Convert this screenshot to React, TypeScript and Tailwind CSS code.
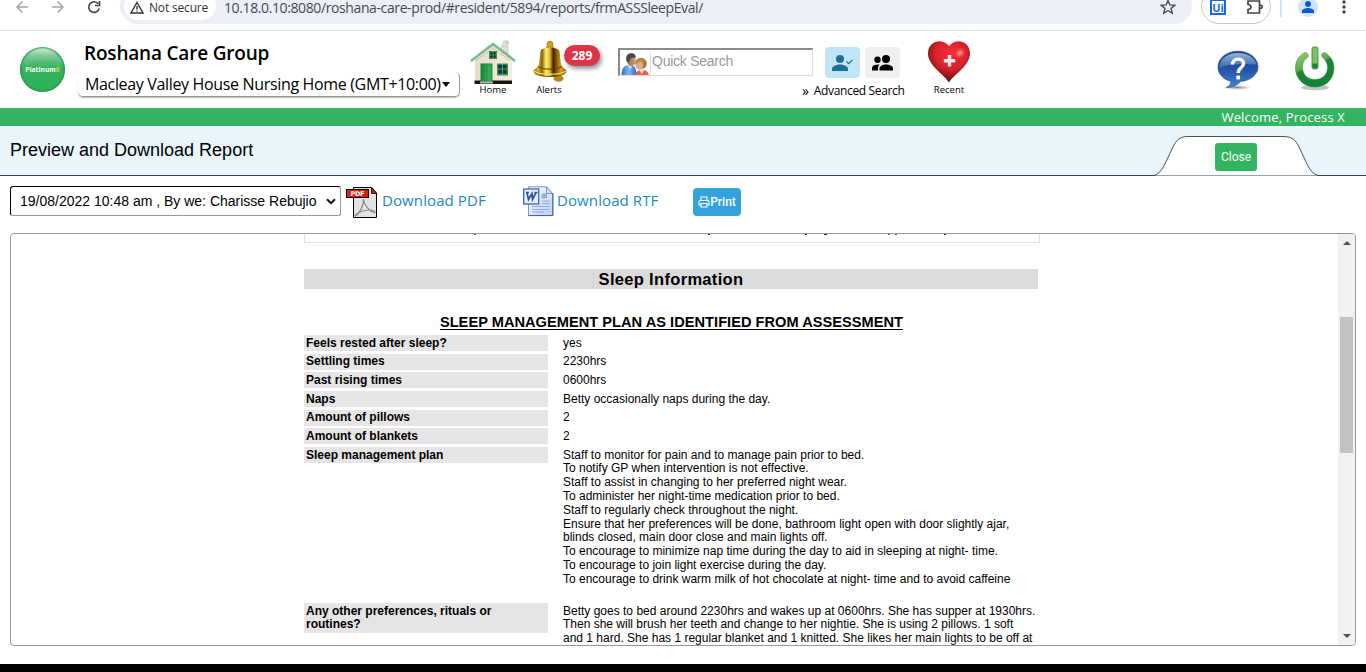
import React from "react";

const UI = "font-['Open_Sans','Noto_Sans',sans-serif]";
const ARIAL = "font-['Liberation_Sans',Arial,sans-serif]";

function HouseIcon() {
  return (
    <svg width="46" height="45" viewBox="0 0 46 45">
      <defs>
        <linearGradient id="door" x1="0" x2="1">
          <stop offset="0" stopColor="#1c8a38" />
          <stop offset="1" stopColor="#46b565" />
        </linearGradient>
        <linearGradient id="wall" x1="0" x2="1">
          <stop offset="0" stopColor="#e6dccb" />
          <stop offset="1" stopColor="#f4ecdf" />
        </linearGradient>
      </defs>
      <circle cx="35" cy="3.500" r="3.400" fill="#dfe1e4" />
      <circle cx="37" cy="2.500" r="2" fill="#c6c9cd" />
      <rect x="31" y="6" width="7" height="11" fill="#e3ddd1" stroke="#c4bdb0" strokeWidth=".6" />
      <path d="M5 20 L23 5 L42 20 V43 H5Z" fill="url(#wall)" />
      <rect x="4.500" y="40.500" width="37.500" height="3.500" fill="#1d1614" />
      <path d="M1 21 L23 4 L45 21" fill="none" stroke="#8aa792" strokeWidth="2.400" />
      <path d="M1 21 L23 4 L45 21" fill="none" stroke="#62cc82" strokeWidth="1.200" />
      <path d="M6 20.500 L23 8 L40 20.500" fill="none" stroke="#cdbfa9" strokeWidth="1" />
      <rect x="19" y="11" width="8" height="8" fill="#2e9a4a" />
      <rect x="20.300" y="12.300" width="5.400" height="5.400" fill="#1c2d3f" />
      <path d="M23 12v6M20 15h6" stroke="#49a45f" strokeWidth=".7" />
      <rect x="10.500" y="23.500" width="12" height="18" fill="#188036" />
      <rect x="11.500" y="24.500" width="10" height="17" fill="url(#door)" />
      <path d="M13 26.500h3v5.500h-3zM17.500 26.500h3v5.500h-3zM13 34h3v6h-3zM17.500 34h3v6h-3z" fill="none" stroke="#1f903f" strokeWidth=".5" />
      <rect x="27" y="23.500" width="11" height="12" fill="#2e9a4a" />
      <rect x="28.300" y="24.800" width="8.400" height="9" fill="#1b3346" />
      <path d="M32.500 24v10M28 29h9" stroke="#4fb069" strokeWidth=".9" />
      <rect x="10" y="41.500" width="13" height="2" fill="#bdb6ae" />
    </svg>
  );
}

function BellIcon() {
  return (
    <svg className="relative left-px" width="38" height="44" viewBox="0 0 38 44">
      <defs>
        <linearGradient id="bell" x1="0" x2="1">
          <stop offset="0" stopColor="#8a6206" />
          <stop offset=".14" stopColor="#d9b02c" />
          <stop offset=".26" stopColor="#8c6206" />
          <stop offset=".38" stopColor="#fff07a" />
          <stop offset=".5" stopColor="#e3b62a" />
          <stop offset=".6" stopColor="#3d2102" />
          <stop offset=".7" stopColor="#8a5c08" />
          <stop offset=".84" stopColor="#d5a524" />
          <stop offset="1" stopColor="#6b4504" />
        </linearGradient>
      </defs>
      <ellipse cx="27.500" cy="38.500" rx="5" ry="3.300" fill="#b38a16" />
      <circle cx="19" cy="4.200" r="3" fill="#d3a21b" stroke="#8c6507" strokeWidth=".7" />
      <rect x="15" y="6" width="8" height="2.500" rx="1.200" fill="#c59416" />
      <path d="M9.500 11C10.500 6.800 27.500 6.800 28.500 11C29.500 17 29 22.500 31 26.500L35.500 30.500C37 38.500 1 38.500 2.500 30.500L7 26.500C9 22.500 8.500 17 9.500 11Z" fill="url(#bell)" />
      <path d="M7 26.500C13 30 25 30 31 26.500" fill="none" stroke="#6b4504" strokeWidth="1.100" />
      <path d="M3 31C9 35.500 29 35.500 35 31" fill="none" stroke="#f7dc55" strokeWidth="1.200" />
      <path d="M4 33.500C10 37.500 28 37.500 34 33.500" fill="none" stroke="#7b5405" strokeWidth="1" />
    </svg>
  );
}

function PeopleIcon() {
  return (
    <svg width="29" height="24" viewBox="0 0 29 24">
      <defs>
        <linearGradient id="blue" x1="0" x2="1">
          <stop offset="0" stopColor="#2f6fca" />
          <stop offset=".5" stopColor="#82b6f5" />
          <stop offset="1" stopColor="#2c6ac4" />
        </linearGradient>
        <linearGradient id="face" x1="0" x2="1">
          <stop offset="0" stopColor="#8d6647" />
          <stop offset="1" stopColor="#d6a680" />
        </linearGradient>
      </defs>
      <path d="M.5 24C.5 16 3 13 8.500 13S15.500 16 15.500 24Z" fill="url(#blue)" />
      <path d="M6.500 12.500h5l-2 5z" fill="#e9dfe0" />
      <ellipse cx="10.500" cy="8.500" rx="4.300" ry="5.500" fill="url(#face)" />
      <path d="M5.500 9.500C4.300 3 7 1.200 10.200 1.200S15.200 3 14.500 6C11 4.500 8.500 6 8 10.500Z" fill="#43474b" />
      <path d="M14 24C14.500 20 16.500 18 21 18S27.500 20 28 24Z" fill="#ea5d53" />
      <path d="M18 18h5l-2 4z" fill="#f2d6c4" />
      <circle cx="20" cy="11.500" r="5.800" fill="#a77b3d" />
      <ellipse cx="18.500" cy="13" rx="3.500" ry="4.500" fill="#d9ae88" />
      <path d="M14.500 12.500C14 6.500 21.500 5 25 9.500C20.500 8.500 17.500 9.500 14.500 12.500Z" fill="#b98e45" />
    </svg>
  );
}

function HeartIcon() {
  return (
    <svg width="44" height="43" viewBox="0 0 44 43">
      <defs>
        <radialGradient id="heart" cx=".55" cy=".3" r=".68">
          <stop offset="0" stopColor="#f5323b" />
          <stop offset=".55" stopColor="#d8202b" />
          <stop offset="1" stopColor="#5c1216" />
        </radialGradient>
        <radialGradient id="glow">
          <stop offset="0" stopColor="#ffb4b4" />
          <stop offset="1" stopColor="#ff5a5e" stopOpacity="0" />
        </radialGradient>
      </defs>
      <path d="M22 42.500C17 34 1 26 1 13.500C1 5 7 1.200 12.500 1.200C17 1.200 20 3.500 22 6C24 3.500 27 1.200 31.500 1.200C37 1.200 43 5 43 13.500C43 26 27 34 22 42.500Z" fill="url(#heart)" />
      <ellipse cx="33" cy="13" rx="6" ry="5" fill="url(#glow)" transform="rotate(-35 33 13)" />
      <path d="M20.800 15h3.400v4h4v3.400h-4v4h-3.400v-4h-4V19h4z" fill="#e9e9ea" />
    </svg>
  );
}

function HelpIcon() {
  return (
    <svg width="42" height="41" viewBox="0 0 42 41">
      <defs>
        <linearGradient id="help" x1="0" x2="0" y1="0" y2="1">
          <stop offset="0" stopColor="#1d4686" />
          <stop offset=".5" stopColor="#2452a6" />
          <stop offset="1" stopColor="#3c86d2" />
        </linearGradient>
        <linearGradient id="shine" x1="0" x2="0" y1="0" y2="1">
          <stop offset="0" stopColor="#b6cfee" stopOpacity=".8" />
          <stop offset="1" stopColor="#6b96d3" stopOpacity=".45" />
        </linearGradient>
        <radialGradient id="shade">
          <stop offset="0" stopColor="#555" stopOpacity=".75" />
          <stop offset="1" stopColor="#999" stopOpacity="0" />
        </radialGradient>
      </defs>
      <ellipse cx="20" cy="37.500" rx="15" ry="2.600" fill="url(#shade)" />
      <path d="M21 1.200C32 1.200 41 8 41 17C41 24.500 33.500 30.500 23.500 31.500C20 35.500 15 37.800 9.500 37.500C12.500 36 14 34 14 31.200C6 29.500 1 24 1 17C1 8 10 1.200 21 1.200Z" fill="url(#help)" stroke="#214c90" strokeWidth=".7" />
      <path d="M21 3C31 3 38.500 8.500 39.500 14.500C28 13.500 12 13.500 2.500 17.500C2.500 8.500 11 3 21 3Z" fill="url(#shine)" />
      <path d="M15.500 14.500C15.500 7.500 26.500 7.500 26.500 13.500C26.500 18 21.200 17.500 21.200 23" fill="none" stroke="#fff" strokeWidth="3.400" />
      <rect x="19.300" y="25.500" width="3.800" height="4" rx="1" fill="#fff" />
    </svg>
  );
}

function PowerIcon() {
  return (
    <svg width="40" height="45" viewBox="0 0 40 45">
      <defs>
        <linearGradient id="power" x1="0" x2=".5" y1="0" y2="1">
          <stop offset="0" stopColor="#97cf73" />
          <stop offset=".45" stopColor="#5cac48" />
          <stop offset=".5" stopColor="#1d8238" />
          <stop offset="1" stopColor="#138338" />
        </linearGradient>
      </defs>
      <ellipse cx="20" cy="41.500" rx="14" ry="2.800" fill="#aaa" opacity=".7" />
      <path d="M9 7C3 10.500 .5 16 .5 22C.5 33 9 41 20 41S39 33 39 22C39 16 36 10.500 30.500 7C27.500 5.500 25.500 9 27.500 11.500C31 14 32.500 17.500 32.500 21.500C32.500 28.500 27.500 33.500 20 33.500S7.500 28.500 7.500 21.500C7.500 17.500 8.500 14 12.500 11.500C14.500 9 12 5.500 9 7Z" fill="url(#power)" stroke="#438d45" strokeWidth=".6" />
      <rect x="17" y="1" width="6" height="22" rx="2" fill="#80c064" stroke="#2e873a" strokeWidth=".8" />
      <path d="M17.400 17.500h5.200v3.500q-2.600 3-5.200 0z" fill="#238238" />
    </svg>
  );
}

function PdfIcon() {
  return (
    <svg className="mt-px shrink-0" width="32" height="32" viewBox="0 0 32 32">
      <path d="M7.500 .5H26L30.500 6.500V30.500H7.500Z" fill="#e2e2e2" stroke="#000" />
      <path d="M25.500 1L31 6.500H25.500Z" fill="#d8210d" stroke="#000" strokeWidth=".8" />
      <path d="M17.500 12C18 18 14 26 9.500 29C8 28 14 24 22 23C26 22.500 29 24 29 25.500C26 26 18.500 20 17.500 12Z" fill="none" stroke="#8b8b8b" strokeWidth="1.200" />
      <rect x=".5" y="2.500" width="22" height="8" fill="#d8210d" stroke="#000" />
      <text x="4.500" y="9" fontFamily="DejaVu Sans" fontSize="6.500" fontWeight="bold" fill="#fff" textLength="14">PDF</text>
    </svg>
  );
}

function WordIcon() {
  return (
    <svg className="shrink-0" width="31" height="31" viewBox="0 0 31 31">
      <defs>
        <linearGradient id="page" x1="0" x2="1" y1="0" y2="1">
          <stop offset="0" stopColor="#fff" />
          <stop offset="1" stopColor="#b9cff3" />
        </linearGradient>
      </defs>
      <path d="M5.500 .8H23.500L29.500 7.500V29.500H5.500Z" fill="url(#page)" stroke="#7d94bf" />
      <path d="M23.500 1V7.500H29.500Z" fill="#d5e2f7" stroke="#6580b2" strokeWidth=".8" />
      <path d="M5.500 29.600H30V7" fill="none" stroke="#41619e" />
      <path d="M19 8h4.500v4h-4.500zM18.500 15h8M18.500 17.500h8M9 20.500h17M9 23.500h17M9 26h12" stroke="#8ba6d5" strokeWidth=".9" fill="#9ab2de" />
      <rect x=".7" y="3" width="15" height="15" fill="#e7effc" stroke="#3c65b4" strokeWidth="1.300" />
      <path d="M3 6.500H6M4 6.500L5.500 13.500L9 7.500L9.500 13.500L13 6.500M11.500 6.500H14.500" stroke="#2a53a4" strokeWidth="1.700" fill="none" />
    </svg>
  );
}

function BrowserBar() {
  return (
    <div className="h-[31px] shrink-0 overflow-hidden border-b border-[#dfdfdf] bg-white">
      <div className={`-mt-3 flex h-9 items-center ${UI}`}>
        <svg className="mt-[2px] ml-4 shrink-0" width="86" height="14" viewBox="0 0 86 14" fill="none" strokeWidth="1.500">
          <path d="M12 7H1.500M6.500 1.500L1 7L6.500 12.500" stroke="#a5a5a5" />
          <path d="M36 7H46.500M41.500 1.500L47 7L41.500 12.500" stroke="#a5a5a5" />
          <path d="M82.300 3.800A5.300 5.300 0 1 0 83.200 8.500" stroke="#474747" strokeWidth="1.700" />
          <path d="M83.500 1V5.500H79" stroke="#474747" strokeWidth="1.700" />
        </svg>
        <div className="ml-[18px] flex h-9 w-[1072px] shrink-0 items-center rounded-full bg-[#eceef8] pl-1">
          <div className="flex h-7 w-[92px] items-center rounded-full bg-white pt-[2px] pl-[6px]">
            <svg width="14" height="13" viewBox="0 0 14 13" fill="none" stroke="#333" strokeWidth="1.400">
              <path d="M7 1.500L13 12H1Z" />
              <path d="M7 5v3.500M7 9.400v1.200" />
            </svg>
            <span className="mt-px ml-[5px] text-xs leading-[12px] font-medium tracking-[-0.17px] whitespace-nowrap text-[#303030]">Not secure</span>
          </div>
          <span className="mt-[4px] ml-2 text-sm leading-[14px] tracking-[-0.39px] whitespace-nowrap text-[#484a50]">
            10.18.0.10:8080/roshana-care-prod/#resident/5894/reports/frmASSSleepEval/
          </span>
          <svg className="mt-[2px] mr-4 ml-auto" width="16" height="16" viewBox="0 0 16 16" fill="none" stroke="#444" strokeWidth="1.300">
            <path d="M8 1.500L9.900 6L14.800 6.300L11 9.400L12.300 14.200L8 11.500L3.700 14.200L5 9.400L1.200 6.300L6.100 6Z" />
          </svg>
        </div>
        <div className="ml-[9px] flex h-9 w-[70px] shrink-0 items-center justify-between rounded-full border border-[#c6c6c6] pt-[2px] pr-[7px] pl-2">
          <span className="flex size-4 items-center justify-center border-2 border-[#1668dc] text-[11px] leading-none font-bold text-[#1668dc]">Ui</span>
          <svg width="17" height="16" viewBox="0 0 17 16" fill="none" stroke="#444" strokeWidth="1.700">
            <path d="M2 2H13.500V14H2V10.500C6 10.500 6 5.500 2 5.500ZM14 6C17 6 17 9.500 14 9.500" />
          </svg>
        </div>
        <span className="mt-1 ml-[9px] h-[18px] w-[2px] bg-[#d3e3fd]" />
        <span className="mt-[2px] ml-4 flex size-5 items-center justify-center overflow-hidden rounded-full bg-[#d3e3fd]">
          <svg width="12" height="12" viewBox="0 0 12 12" fill="#0b57d0">
            <circle cx="6" cy="3" r="2.900" />
            <path d="M0 12V10C0 8 4 7 6 7S12 8 12 10V12Z" />
          </svg>
        </span>
        <svg className="mt-[2px] ml-6" width="4" height="16" viewBox="0 0 4 16" fill="#444">
          <circle cx="2" cy="3" r="1.700" />
          <circle cx="2" cy="8" r="1.700" />
          <circle cx="2" cy="13" r="1.700" />
        </svg>
      </div>
    </div>
  );
}

function Header() {
  return (
    <header className={`flex h-[77px] shrink-0 items-start bg-white text-black ${UI}`}>
      <div className="mt-4 ml-5 flex size-[45px] shrink-0 items-center justify-center rounded-full bg-[linear-gradient(#e4f4e8_0%,#86cb9b_18%,#35b45f_45%,#2cb15a_100%)] shadow-[inset_0_0_2px_1px_#269348]">
        <span className="text-[6.500px] font-bold tracking-[0.1px] text-white">
          Platinum<span className="text-[#d5d32c]">6</span>
        </span>
      </div>
      <div className="mt-2 ml-[13px] w-[382px] shrink-0">
        <h1 className="pl-[6px] text-[19px] leading-[29px] font-semibold tracking-[-0.2px] whitespace-nowrap">Roshana Care Group</h1>
        <div className="mt-[4px] flex h-[25px] items-center rounded-[5px] border-r border-b border-[#999] pl-[7px] text-base whitespace-nowrap shadow-[0_1px_1px_#bbb]">
          <span className="tracking-[-0.34px]">Macleay Valley House Nursing Home (GMT+10:00)</span>
          <span className="ml-px border-x-4 border-t-[5px] border-x-transparent border-t-black" />
        </div>
      </div>
      <div className="mt-[9px] ml-[10px] flex w-[46px] shrink-0 flex-col items-center">
        <HouseIcon />
        <span className="-mt-px text-[9.500px] leading-[12px]">Home</span>
      </div>
      <div className="relative mt-[9px] ml-4 flex w-[34px] shrink-0 flex-col items-center">
        <BellIcon />
        <span className="text-[9.500px] leading-[12px]">Alerts</span>
        <span className="absolute top-[5px] left-[32px] flex h-[21px] w-9 items-center justify-center rounded-full bg-[#dc3545] text-xs font-bold text-white shadow-[2px_3px_4px_#999]">289</span>
      </div>
      <div className="ml-[52px] w-[287px] shrink-0">
        <div className="mt-4 flex">
          <div className={`mt-px flex h-[28px] w-[195px] border-t-2 border-l-2 border-t-[#8a8a8a] border-l-[#8a8a8a] border-r border-b border-r-[#ddd] border-b-[#ddd] ${ARIAL}`}>
            <div className="mt-[2px] h-[23px] w-[31px] overflow-hidden border-r border-[#ddd] pl-px"><PeopleIcon /></div>
            <span className="ml-px text-sm leading-[23px] tracking-[-0.25px] text-[#999]">Quick Search</span>
          </div>
          <button className="ml-3 flex h-[31px] w-[35px] items-center justify-center rounded bg-[#c1e5f5]">
            <svg width="21" height="16" viewBox="0 0 21 16" fill="#1d7096">
              <circle cx="8" cy="4" r="4" />
              <path d="M0 16V14C0 11 5 9.500 8 9.500S16 11 16 14V16Z" />
              <path d="M14.500 6.500L16.700 8.700L20.500 4.900" fill="none" stroke="#1d7096" strokeWidth="1.300" />
            </svg>
          </button>
          <button className="ml-[5px] flex h-[31px] w-[35px] items-center justify-center rounded bg-[#efefef]">
            <svg width="21" height="16" viewBox="0 0 21 16" fill="#000">
              <circle cx="5.500" cy="4.700" r="3.200" />
              <path d="M0 15.500V13C0 10.500 3 9.500 7.500 9.500C6 11 6 13 6 15.500Z" />
              <circle cx="14" cy="4" r="4" />
              <path d="M7.500 15.500V13.500C7.500 11 11 9.500 14 9.500S21 11 21 13.500V15.500Z" />
            </svg>
          </button>
        </div>
        <div className="mt-1 flex justify-end text-[12px] leading-[17px] whitespace-nowrap">
          <span className="mr-[5px] text-[14px]">»</span>
          <span className="mr-[0.500px] tracking-[-0.35px]">Advanced Search</span>
        </div>
      </div>
      <div className="mt-[9px] ml-[22px] flex w-[44px] shrink-0 flex-col items-center">
        <HeartIcon />
        <span className="mt-px text-[9.500px] leading-[12px]">Recent</span>
      </div>
      <div className="mt-[19px] ml-auto"><HelpIcon /></div>
      <div className="mt-[15px] mr-[31px] ml-9"><PowerIcon /></div>
    </header>
  );
}

const answers = [
  ["Feels rested after sleep?", "yes"],
  ["Settling times", "2230hrs"],
  ["Past rising times", "0600hrs"],
  ["Naps", "Betty occasionally naps during the day."],
  ["Amount of pillows", "2"],
  ["Amount of blankets", "2"],
];

const plan = [
  "Staff to monitor for pain and to manage pain prior to bed.",
  "To notify GP when intervention is not effective.",
  "Staff to assist in changing to her preferred night wear.",
  "To administer her night-time medication prior to bed.",
  "Staff to regularly check throughout the night.",
  "Ensure that her preferences will be done, bathroom light open with door slightly ajar,",
  "blinds closed, main door close and main lights off.",
  "To encourage to minimize nap time during the day to aid in sleeping at night- time.",
  "To encourage to join light exercise during the day.",
  "To encourage to drink warm milk of hot chocolate at night- time and to avoid caffeine",
];

const routines = [
  "Betty goes to bed around 2230hrs and wakes up at 0600hrs. She has supper at 1930hrs.",
  "Then she will brush her teeth and change to her nightie. She is using 2 pillows. 1 soft",
  "and 1 hard. She has 1 regular blanket and 1 knitted. She likes her main lights to be off at",
];

function Report() {
  return (
    <div className="ml-[293px] w-[736px] shrink-0 text-xs whitespace-nowrap text-black">
      <div className="h-[9px] border-x border-b border-[#e2e2e2]">
        <svg className="block" width="734" height="2" fill="#222">
          <path d="M169 0h2v1h-2z" fill="#23769d" />
          <path d="M403 0h2v1h-2zM500 0h2v1h-2zM519 0h3v1h-3zM639 0h2v1h-2z" />
          <path d="M583 0h2v1h-2zM590 0h2v1h-2z" fill="#23769d" />
        </svg>
      </div>
      <h2 className="mt-[26px] h-5 w-[734px] bg-[#dbdbdb] text-center text-[16.500px] leading-[20px] font-bold tracking-[0.320px]">Sleep Information</h2>
      <h3 className="mt-[23px] h-[23px] w-[734px] pl-px text-center text-[14.600px] leading-[20px] font-bold tracking-[0.03px] underline decoration-1 underline-offset-2">
        SLEEP MANAGEMENT PLAN AS IDENTIFIED FROM ASSESSMENT
      </h3>
      {answers.map(([label, value]) => (
        <div key={label} className="flex h-[18.670px] items-start leading-[16px]">
          <div className="flex h-4 w-[244px] bg-[#e5e5e5] pl-[2px] font-bold">
            <div className="-mt-[0.300px]">{label}</div>
          </div>
          <div className="-mt-[0.300px] ml-[15px]">{value}</div>
        </div>
      ))}
      <div className="flex h-[156px] items-start">
        <div className="h-4 w-[244px] bg-[#e5e5e5] pl-[2px] leading-[16px] font-bold">Sleep management plan</div>
        <div className="mt-[1.700px] ml-[15px] leading-[13.800px]">
          {plan.map((line) => <div key={line}>{line}</div>)}
        </div>
      </div>
      <div className="flex items-start">
        <div className="h-[30px] w-[244px] bg-[#e5e5e5] pt-[2px] pl-[2px] leading-[13px] font-bold">
          <div>Any other preferences, rituals or</div>
          <div>routines?</div>
        </div>
        <div className="mt-[1.600px] ml-[15px] leading-[13.600px]">
          {routines.map((line) => <div key={line}>{line}</div>)}
        </div>
      </div>
    </div>
  );
}

export default function App() {
  return (
    <div className={`flex h-[672px] w-[1366px] flex-col overflow-hidden bg-white text-black ${ARIAL}`}>
      <BrowserBar />
      <Header />
      <div className={`h-[18px] shrink-0 bg-[#33b460] pr-[21px] text-right text-[13px] leading-[18px] tracking-[0.17px] text-white ${UI}`}>Welcome, Process X</div>
      <div className="flex h-[50px] shrink-0 justify-between border-b border-[#2a4365] bg-[#e9f4fb]">
        <h2 className="pl-[10px] text-lg leading-[49px]">Preview and Download Report</h2>
        <div className="relative mt-[10px] mr-12 flex h-[40px] w-[164px] justify-center">
          <svg className="absolute inset-0" width="164" height="40" viewBox="0 0 164 40">
            <path d="M0 39.500C8 38 12 25 18.500 12C22 4 26 .5 34 .5H129C138 .5 142 4 145.500 12C152 25 155 37 164 39.500" fill="#fff" stroke="#4c4f52" />
          </svg>
          <button className="relative mt-[7px] h-7 w-[42px] rounded-[3px] bg-[#33b460] font-['Roboto',sans-serif] text-xs text-white">Close</button>
        </div>
      </div>
      <div className="flex h-[57px] shrink-0 items-start bg-white pt-[10px] pl-[10px]">
        <div className="flex h-[30px] w-[331px] items-center justify-between rounded-[3px] border border-t-black border-r-[#999] border-b-[#999] border-l-black pr-1 pl-[9px] text-sm whitespace-nowrap">
          <span>19/08/2022 10:48 am , By we: Charisse Rebujio</span>
          <svg width="10" height="7" viewBox="0 0 10 7" fill="none" stroke="#111" strokeWidth="2">
            <path d="M1 1.200L5 5.200L9 1.200" />
          </svg>
        </div>
        <div className="ml-[5px] flex text-[#2487be]">
          <PdfIcon />
          <span className={`ml-1 w-[105px] text-[15px] leading-[29px] tracking-[0.1px] whitespace-nowrap ${UI}`}>Download PDF</span>
        </div>
        <div className="ml-9 flex text-[#2487be]">
          <WordIcon />
          <span className={`ml-[3px] w-[102px] text-[15px] leading-[29px] tracking-[0.1px] whitespace-nowrap ${UI}`}>Download RTF</span>
        </div>
        <button className="mt-[2px] ml-[34px] flex h-7 w-12 items-center justify-center rounded bg-[#34a3dd] font-['Roboto',sans-serif] text-[12px] font-medium text-white">
          <svg width="12" height="12" viewBox="0 0 12 12" fill="none" stroke="#fff" strokeWidth="1.100">
            <path d="M3 4V1H9V4M3 9H1V6Q1 4.500 2.500 4.500H9.500Q11 4.500 11 6V9H9M3 7.500H9V11H3Z" />
          </svg>
          Print
        </button>
      </div>
      <div className="mx-[10px] flex h-[413px] shrink-0 justify-between overflow-hidden rounded border border-[#999]">
        <Report />
        <div className="flex w-[17px] flex-col items-center bg-[#f1f1f1]">
          <span className="mt-[7px] border-x-[4px] border-b-[4px] border-x-transparent border-b-[#505050]" />
          <span className="mt-[72px] h-[136px] w-[13px] bg-[#c1c1c1]" />
          <span className="mt-auto mb-[7px] border-x-[4px] border-t-[4px] border-x-transparent border-t-[#505050]" />
        </div>
      </div>
      <div className="mt-[18px] h-2 shrink-0 bg-black" />
    </div>
  );
}
